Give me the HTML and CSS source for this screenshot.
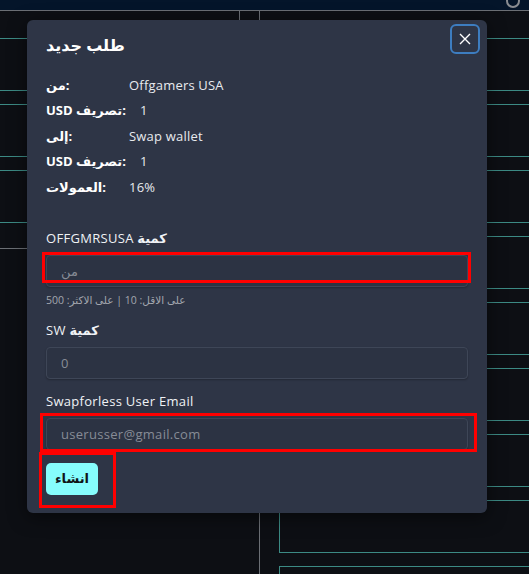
FILE: index.html
```html
<!DOCTYPE html>
<html lang="ar">
<head>
<meta charset="utf-8">
<link rel="stylesheet" href="styles.css">
</head>
<body>
<div class="page">
  <div class="topbar"><span class="topicon"></span></div>
  <div class="bg">
    <div class="col-left">
      <div class="card"></div>
      <div class="card"></div>
      <div class="card"></div>
      <div class="divider"></div>
    </div>
    <div class="col-mid"><div class="midbox"></div></div>
    <div class="col-right">
      <div class="rcard"></div>
      <div class="rcard"></div>
      <div class="rcard"></div>
      <div class="rcard"></div>
      <div class="rcard"></div>
      <div class="rcard"></div>
      <div class="rcard"></div>
      <div class="rcard"></div>
      <div class="rcard"></div>
    </div>
  </div>

  <div class="modal">
    <div class="modal-head">
      <h2 class="title">طلب جديد</h2>
      <button class="close" aria-label="close">
        <svg width="12" height="12" viewBox="0 0 12 12"><path d="M1 1L11 11M11 1L1 11" stroke="#ffffff" stroke-width="1.4" fill="none"/></svg>
      </button>
    </div>
    <div class="details">
      <div class="lbl">من:</div><div class="val">Offgamers USA</div>
      <div class="lbl">USD تصريف:</div><div class="val num">1</div>
      <div class="lbl">إلى:</div><div class="val">Swap wallet</div>
      <div class="lbl">USD تصريف:</div><div class="val num">1</div>
      <div class="lbl">العمولات:</div><div class="val">16%</div>
    </div>

    <div class="field first">
      <div class="flabel">OFFGMRSUSA <b>كمية</b></div>
      <div class="inwrap">
        <div class="input placeholder">من</div>
        <span class="mark mark1"></span>
      </div>
      <div class="hint"><span dir="rtl">على الاقل: 10 | على الاكثر: 500</span></div>
    </div>

    <div class="field">
      <div class="flabel">SW <b>كمية</b></div>
      <div class="inwrap">
        <div class="input placeholder">0</div>
      </div>
    </div>

    <div class="field">
      <div class="flabel">Swapforless User Email</div>
      <div class="inwrap">
        <div class="input placeholder">userusser@gmail.com</div>
        <span class="mark mark2"></span>
      </div>
    </div>

    <div class="actions">
      <button class="create">انشاء</button>
      <span class="mark mark3"></span>
    </div>
  </div>
</div>
</body>
</html>
```

FILE: styles.css
```css
* { box-sizing: border-box; }
html, body { margin: 0; padding: 0; }
body {
  background: #0d0f14;
  font-family: "Open Sans", "DejaVu Sans", sans-serif;
  overflow: hidden;
}
.page {
  position: relative;
  width: 529px;
  height: 574px;
  overflow: hidden;
}
.topbar {
  height: 11px;
  background: #04152a;
  border-bottom: 1px solid #6b6f75;
  position: relative;
}
.topicon {
  position: absolute;
  right: 9px;
  top: -6px;
  width: 14px;
  height: 14px;
  border: 2px solid #8a8d92;
  border-radius: 50%;
}
.bg {
  display: grid;
  grid-template-columns: 239px 20px 270px;
  height: 563px;
}
.col-left {
  padding-top: 27px;
  display: flex;
  flex-direction: column;
  gap: 13px;
}
.card {
  height: 53px;
  border-top: 1px solid #3c8a84;
  border-bottom: 1px solid #3c8a84;
}
.divider {
  margin-top: 12px;
  height: 1px;
  background: #6b6f75;
}
.col-mid { }
.midbox {
  height: 60px;
  border-left: 1px solid #6b6f75;
}
.col-right {
  border-left: 1px solid #6b6f75;
  padding-top: 27px;
  padding-left: 19px;
  display: flex;
  flex-direction: column;
  gap: 13px;
}
.rcard {
  flex: none;
  height: 53px;
  border: 1px solid #3c8a84;
  border-right: none;
}

.modal {
  position: absolute;
  left: 27px;
  top: 20px;
  width: 460px;
  height: 493px;
  background: #2e3546;
  border-radius: 6px;
  padding: 0 19px;
  box-shadow: 0 4px 18px rgba(0,0,0,0.5);
  color: #ffffff;
}
.modal-head {
  height: 52px;
  padding-top: 14px;
}
.title {
  margin: 0;
  font-size: 16px;
  line-height: 22px;
  font-weight: 700;
}
.close {
  position: absolute;
  top: 4px;
  right: 7px;
  width: 30px;
  height: 30px;
  border: 2px solid #3d7dc0;
  border-radius: 6px;
  background: transparent;
  padding: 0;
  display: flex;
  align-items: center;
  justify-content: center;
}
.details {
  display: grid;
  grid-template-columns: 83px 1fr;
  grid-auto-rows: 25.5px;
  align-items: center;
  font-size: 13px;
}
.lbl { font-weight: 700; color: #ffffff; }
.val { color: #e8eaee; letter-spacing: 0.2px; }
.val.num { padding-left: 11px; }

.field { margin-top: 13px; }
.field.first { margin-top: 29px; }
.flabel {
  font-size: 13px;
  line-height: 18px;
  color: #f0f2f5;
  margin-bottom: 8px;
  letter-spacing: 0.3px;
}
.flabel b { font-weight: 700; }
.inwrap { position: relative; }
.input {
  height: 32px;
  border: 1px solid #3e4657;
  border-radius: 4px;
  background: #2c3343;
  padding-left: 14px;
  display: flex;
  align-items: center;
  font-size: 13px;
  box-shadow: 0 1px 2px rgba(0,0,0,0.25);
}
.placeholder { color: #878c96; letter-spacing: 0.3px; }
.hint {
  margin-top: 5px;
  font-size: 10.5px;
  line-height: 16px;
  color: #a3a7ae;
}
.actions {
  position: relative;
  margin-top: 13px;
  width: 52px;
}
.create {
  width: 52px;
  height: 32px;
  border: none;
  border-radius: 5px;
  background: #86fdfd;
  color: #111418;
  font-family: "DejaVu Sans", sans-serif;
  font-size: 13px;
  font-weight: 700;
  padding: 0;
}
.mark {
  position: absolute;
  border: 3px solid #ff0000;
  pointer-events: none;
}
.mark1 { left: -4px; top: -3px; width: 429px; height: 31px; }
.mark2 { left: -6px; top: -5px; width: 437px; height: 39px; }
.mark3 { left: -7px; top: -11px; width: 77px; height: 56px; }
```
